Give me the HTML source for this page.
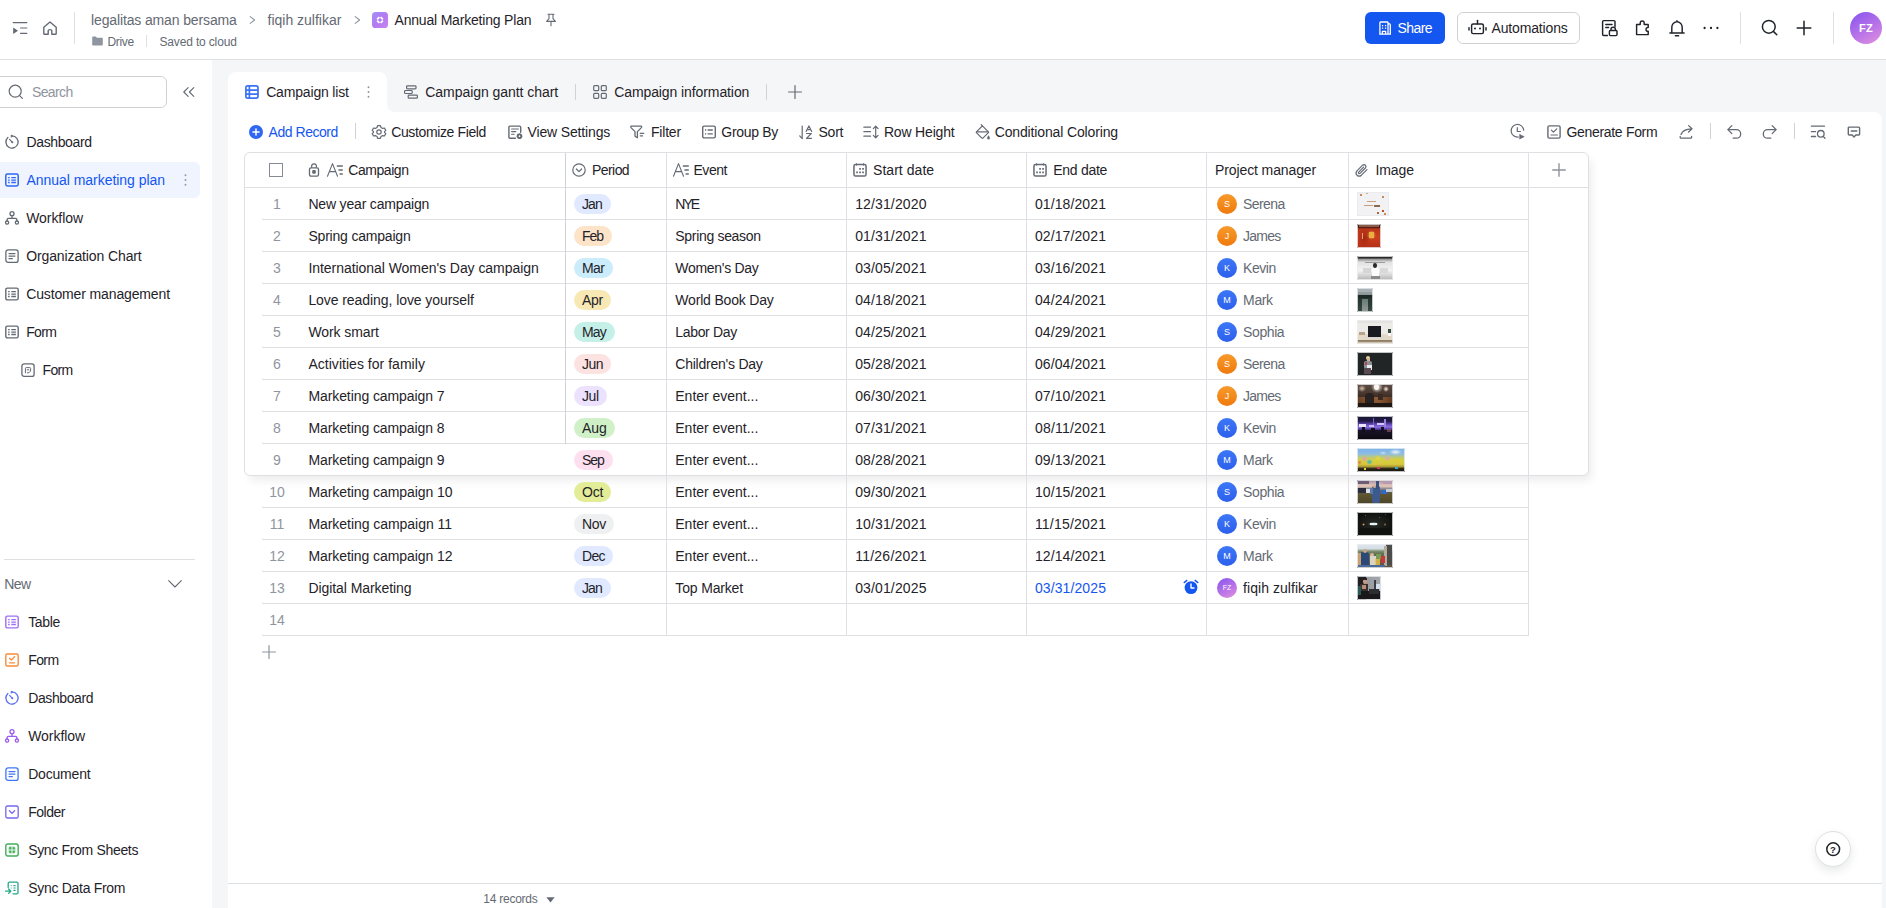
<!DOCTYPE html>
<html lang="en">
<head>
<meta charset="utf-8">
<title>Annual Marketing Plan</title>
<style>
*{box-sizing:border-box;margin:0;padding:0}
html,body{width:1886px;height:908px;overflow:hidden}
body{background:#f5f6f7;font-family:"Liberation Sans",sans-serif;font-size:14px;color:#1f2329;position:relative}
.abs{position:absolute}
svg{display:block;overflow:visible}
.t{position:absolute;white-space:nowrap;line-height:20px;height:20px}
.th{overflow:hidden;border-radius:1.5px}
.th b{position:absolute;left:0;top:0;right:0;bottom:0;box-shadow:inset 0 0 0 1px rgba(236,237,241,.8);border-radius:1.5px}
.th i{position:absolute;display:block;filter:blur(.5px)}
#hdr{position:absolute;left:0;top:0;width:1886px;height:60px;background:#fff;border-bottom:1px solid #dee0e3}
#side{position:absolute;left:0;top:60px;width:212px;height:848px;background:#fff;overflow:hidden}
#tabbar{position:absolute;left:228px;top:72px;width:1654px;height:40px}
#main{position:absolute;left:228px;top:112px;width:1654px;height:796px;background:#fff;border-radius:0 8px 0 0}
</style>
</head>
<body>
<div id="hdr">
<svg class="abs" style="left:12px;top:20px" width="16" height="16" viewBox="0 0 16 16" fill="none" stroke="#646a73" stroke-width="1.2" stroke-linecap="round" stroke-linejoin="round"><path d="M1.2 2.6H14.8M8.6 8H14.8M8.6 13.4H14.8"/><path d="M1.2 7.4L6 10.7L1.2 14Z" fill="#646a73" stroke="none"/></svg>
<svg class="abs" style="left:42px;top:20px" width="16" height="16" viewBox="0 0 16 16" fill="none" stroke="#646a73" stroke-width="1.4" stroke-linecap="round" stroke-linejoin="round"><path d="M1.8 7.2L8 2L14.2 7.2V13.4Q14.2 14.2 13.4 14.2H9.8V10.6Q9.8 9.6 8 9.6Q6.2 9.6 6.2 10.6V14.2H2.6Q1.8 14.2 1.8 13.4Z"/></svg>
<div class="abs" style="left:74px;top:12px;width:1px;height:32px;background:#dee0e3"></div>
<div class="t" style="left:91px;top:10px;color:#646a73;letter-spacing:-0.132px">legalitas aman bersama</div>
<svg class="abs" style="left:249px;top:16px" width="7" height="8" viewBox="0 0 7 8" fill="none" stroke="#8f959e" stroke-width="1.1" stroke-linecap="round" stroke-linejoin="round"><path d="M1.2 0.6L5.6 4L1.2 7.4"/></svg>
<div class="t" style="left:267.5px;top:10px;color:#646a73">fiqih zulfikar</div>
<svg class="abs" style="left:354px;top:16px" width="7" height="8" viewBox="0 0 7 8" fill="none" stroke="#8f959e" stroke-width="1.1" stroke-linecap="round" stroke-linejoin="round"><path d="M1.2 0.6L5.6 4L1.2 7.4"/></svg>
<svg class="abs" style="left:372px;top:12px" width="16" height="16" viewBox="0 0 16 16"><defs><linearGradient id="ga" x1="0" y1="0" x2="1" y2="1"><stop offset="0" stop-color="#9f90f7"/><stop offset="0.5" stop-color="#b47af2"/><stop offset="1" stop-color="#c985ee"/></linearGradient></defs><rect width="16" height="16" rx="3.6" fill="url(#ga)"/><path d="M5.1 7.4L7.4 5.1M8.6 5.1L10.9 7.4M10.9 8.6L8.6 10.9M7.4 10.9L5.1 8.6" stroke="#fff" stroke-width="1.8" fill="none"/></svg>
<div class="t" style="left:394.5px;top:10px;letter-spacing:-0.191px">Annual Marketing Plan</div>
<svg class="abs" style="left:545px;top:13px" width="12" height="14" viewBox="0 0 12 14" fill="none" stroke="#646a73" stroke-width="1.1" stroke-linecap="round" stroke-linejoin="round"><path d="M3 1.2H9M4 1.4V5.6L1.6 8.4H10.4L8 5.6V1.4M6 8.6V12.8"/></svg>
<svg class="abs" style="left:92px;top:36px" width="11" height="10" viewBox="0 0 11 10"><path d="M0.2 1.4Q0.2 0.6 1 0.6H3.8L4.9 1.8H10Q10.8 1.8 10.8 2.6V8.8Q10.8 9.6 10 9.6H1Q0.2 9.6 0.2 8.8Z" fill="#8f959e"/></svg>
<div class="t" style="left:107.5px;top:32px;color:#646a73;font-size:12px;letter-spacing:-0.329px">Drive</div>
<div class="abs" style="left:146px;top:35px;width:1px;height:12px;background:#dee0e3"></div>
<div class="t" style="left:159.5px;top:32px;color:#646a73;font-size:12px;letter-spacing:-0.158px">Saved to cloud</div>
<div class="abs" style="left:1365px;top:12px;width:80px;height:32px;border-radius:6px;background:#1456f0"></div>
<svg class="abs" style="left:1378px;top:20px" width="14" height="15" viewBox="0 0 14 15" fill="none" stroke="#fff" stroke-width="1.3" stroke-linejoin="round"><path d="M1.9 14.2V2.8Q1.9 2 2.7 2H9.2Q10 2 10 2.8V14.2M10 3.2L11.6 3.8Q12.3 4.1 12.3 4.9V14.2M1.2 14.2H13M4.4 14.2V11.4H7.6V14.2"/><path d="M3.9 4.9h1.3v1.3h-1.3zM6.9 4.9h1.3v1.3h-1.3zM3.9 7.5h1.3v1.3h-1.3zM6.9 7.5h1.3v1.3h-1.3z" fill="#fff" stroke="none"/></svg>
<div class="t" style="left:1397.5px;top:18px;color:#fff;letter-spacing:-0.586px">Share</div>
<div class="abs" style="left:1457px;top:12px;width:123px;height:32px;border-radius:6px;border:1px solid #d0d3d6;background:#fff"></div>
<svg class="abs" style="left:1468px;top:19px" width="19" height="16" viewBox="0 0 19 16" fill="none" stroke="#1f2329" stroke-width="1.45" stroke-linecap="round" stroke-linejoin="round"><rect x="3.6" y="5" width="11.8" height="9.6" rx="1.6"/><path d="M9.5 4.8V2.2M1 8.6V11M18 8.6V11"/><circle cx="9.5" cy="1.6" r="0.9" fill="#1f2329" stroke="none"/><circle cx="7" cy="9.6" r="1" fill="#1f2329" stroke="none"/><circle cx="12" cy="9.6" r="1" fill="#1f2329" stroke="none"/></svg>
<div class="t" style="left:1491.5px;top:18px;letter-spacing:-0.15px">Automations</div>
<svg class="abs" style="left:1601px;top:19px" width="17" height="18" viewBox="0 0 17 18" fill="none" stroke="#1f2329" stroke-width="1.45" stroke-linecap="round" stroke-linejoin="round"><path d="M6.4 16.4H2.6Q1.6 16.4 1.6 15.4V2.6Q1.6 1.6 2.6 1.6H13Q14 1.6 14 2.6V7.4"/><path d="M4.8 5.4H11M4.8 8.4H7.6"/><rect x="8.4" y="11.4" width="7.6" height="5.2" rx="1"/><path d="M10 11.2V10Q10 8.2 12.2 8.2Q14.4 8.2 14.4 10V11.2"/></svg>
<svg class="abs" style="left:1635px;top:20px" width="16" height="16" viewBox="0 0 16 16" fill="none" stroke="#1f2329" stroke-width="1.45" stroke-linecap="round" stroke-linejoin="round"><path d="M1.6 14.6V4.4H5.2V3.2Q5.2 1 7.2 1Q9.2 1 9.2 3.2V4.4H13.2V7.6Q11 7.4 11 9.4Q11 11.4 13.2 11.2V14.6Z"/></svg>
<svg class="abs" style="left:1669px;top:20px" width="16" height="17" viewBox="0 0 16 17" fill="none" stroke="#1f2329" stroke-width="1.45" stroke-linecap="round" stroke-linejoin="round"><path d="M2.8 12.8V7.6Q2.8 2.6 8 1.6Q13.2 2.6 13.2 7.6V12.8M0.9 13H15.1M6.4 15.7H9.6M8 0.7V1.6"/></svg>
<svg class="abs" style="left:1703px;top:26px" width="16" height="4" viewBox="0 0 16 4" fill="#1f2329"><circle cx="1.6" cy="2" r="1.15"/><circle cx="8" cy="2" r="1.15"/><circle cx="14.4" cy="2" r="1.15"/></svg>
<div class="abs" style="left:1740px;top:12px;width:1px;height:32px;background:#dee0e3"></div>
<svg class="abs" style="left:1761px;top:19px" width="17" height="17" viewBox="0 0 17 17" fill="none" stroke="#1f2329" stroke-width="1.5" stroke-linecap="round" stroke-linejoin="round"><circle cx="7.8" cy="7.8" r="6.4"/><path d="M12.6 12.6L15.8 15.8"/></svg>
<svg class="abs" style="left:1796px;top:20px" width="16" height="16" viewBox="0 0 16 16" fill="none" stroke="#1f2329" stroke-width="1.5" stroke-linecap="round" stroke-linejoin="round"><path d="M8 1.2V14.8M1.2 8H14.8"/></svg>
<div class="abs" style="left:1833px;top:12px;width:1px;height:32px;background:#dee0e3"></div>
<div class="abs" style="left:1850px;top:12px;width:32px;height:32px;border-radius:50%;background:linear-gradient(150deg,#8a56ee 5%,#b873e8 55%,#e293dd 100%);color:#fff;font-size:11px;font-weight:bold;text-align:center;line-height:32px;letter-spacing:0.3px">FZ</div>
</div>
<div id="side">
<div class="abs" style="left:-8px;top:16px;width:175px;height:32px;border:1px solid #d0d3d6;border-radius:6px"></div>
<svg class="abs" style="left:8px;top:24px" width="16" height="16" viewBox="0 0 16 16" fill="none" stroke="#646a73" stroke-width="1.2" stroke-linecap="round" stroke-linejoin="round"><circle cx="7.2" cy="7.2" r="6"/><path d="M11.6 11.6L14.4 14.4"/></svg>
<div class="t" style="left:32px;top:22px;color:#8f959e;letter-spacing:-0.629px">Search</div>
<svg class="abs" style="left:183px;top:27px" width="12" height="10" viewBox="0 0 12 10" fill="none" stroke="#646a73" stroke-width="1.1" stroke-linecap="round" stroke-linejoin="round"><path d="M5.2 0.6L0.8 5L5.2 9.4M10.8 0.6L6.4 5L10.8 9.4"/></svg>
<svg class="abs" style="left:5px;top:75px" width="14" height="14" viewBox="0 0 14 14" fill="none" stroke="#646a73" stroke-width="1.3" stroke-linecap="round" stroke-linejoin="round"><path d="M7 0.9A6.1 6.1 0 1 1 2.9 2.5"/><path d="M7.2 7.2L4.6 4.4" stroke-width="1.2"/><circle cx="7.3" cy="7.3" r="1" fill="#646a73" stroke="none"/><path d="M7.6 0.9L6.2 0.1V1.9Z" fill="#646a73" stroke-width="0.8"/></svg>
<div class="t" style="left:26.5px;top:72px;letter-spacing:-0.369px">Dashboard</div>
<div class="abs" style="left:-8px;top:102px;width:208px;height:36px;border-radius:6px;background:#eff4ff"></div>
<svg class="abs" style="left:184px;top:114px" width="3" height="12" viewBox="0 0 3 12" fill="#8f959e"><circle cx="1.5" cy="1.3" r="0.95"/><circle cx="1.5" cy="6" r="0.95"/><circle cx="1.5" cy="10.7" r="0.95"/></svg>
<svg class="abs" style="left:5px;top:113px" width="14" height="14" viewBox="0 0 14 14" fill="none" stroke="#2f66f4" stroke-width="1.5" stroke-linecap="round" stroke-linejoin="round"><rect x="0.8" y="1.1" width="12.4" height="11.8" rx="1.6"/><path d="M3.1 4.7H4.7M6.3 4.7H10.9M3.1 7.1H4.7M6.3 7.1H10.9M3.1 9.5H4.7M6.3 9.5H10.9" stroke-linecap="butt" stroke-width="1.3"/></svg>
<div class="t" style="left:26.5px;top:110px;color:#1456f0;letter-spacing:-0.037px">Annual marketing plan</div>
<svg class="abs" style="left:5px;top:151px" width="14" height="14" viewBox="0 0 14 14" fill="none" stroke="#646a73" stroke-width="1.3" stroke-linecap="round" stroke-linejoin="round"><circle cx="7" cy="2.7" r="2"/><circle cx="2.1" cy="11.6" r="1.6"/><circle cx="11.9" cy="11.6" r="1.6"/><path d="M7 4.8V7.4M2.1 9.9V8.8Q2.1 7.4 3.5 7.4H10.5Q11.9 7.4 11.9 8.8V9.9"/></svg>
<div class="t" style="left:26.2px;top:148px;letter-spacing:-0.057px">Workflow</div>
<svg class="abs" style="left:5px;top:189px" width="14" height="14" viewBox="0 0 14 14" fill="none" stroke="#646a73" stroke-width="1.3" stroke-linecap="round" stroke-linejoin="round"><rect x="0.9" y="0.8" width="12.2" height="12.6" rx="2.2"/><path d="M4 4.6H10M4 7.1H10M4 9.6H7.4" stroke-width="1.2"/></svg>
<div class="t" style="left:26.2px;top:186px;letter-spacing:-0.115px">Organization Chart</div>
<svg class="abs" style="left:5px;top:227px" width="14" height="14" viewBox="0 0 14 14" fill="none" stroke="#646a73" stroke-width="1.4" stroke-linecap="round" stroke-linejoin="round"><rect x="0.8" y="1.1" width="12.4" height="11.8" rx="1.6"/><path d="M3.1 4.7H4.7M6.3 4.7H10.9M3.1 7.1H4.7M6.3 7.1H10.9M3.1 9.5H4.7M6.3 9.5H10.9" stroke-linecap="butt" stroke-width="1.3"/></svg>
<div class="t" style="left:26.2px;top:224px;letter-spacing:-0.134px">Customer management</div>
<svg class="abs" style="left:5px;top:265px" width="14" height="14" viewBox="0 0 14 14" fill="none" stroke="#646a73" stroke-width="1.4" stroke-linecap="round" stroke-linejoin="round"><rect x="0.8" y="1.1" width="12.4" height="11.8" rx="1.6"/><path d="M3.1 4.7H4.7M6.3 4.7H10.9M3.1 7.1H4.7M6.3 7.1H10.9M3.1 9.5H4.7M6.3 9.5H10.9" stroke-linecap="butt" stroke-width="1.3"/></svg>
<div class="t" style="left:26.2px;top:262px;letter-spacing:-0.647px">Form</div>
<svg class="abs" style="left:21px;top:303px" width="14" height="14" viewBox="0 0 14 14" fill="none" stroke="#646a73" stroke-width="1.3" stroke-linecap="round" stroke-linejoin="round"><rect x="0.9" y="0.8" width="12.2" height="12.6" rx="2.2"/><path d="M4.4 9.8V5.4Q4.4 4.6 5.2 4.6H8.8Q9.6 4.6 9.6 5.4V8L7.8 9.8H6.4M6.2 6.8H7.8" stroke-width="1"/></svg>
<div class="t" style="left:42.5px;top:300px;letter-spacing:-0.647px">Form</div>
<div class="abs" style="left:4px;top:499px;width:191px;height:1px;background:#dee0e3"></div>
<div class="t" style="left:4.2px;top:514px;color:#646a73;letter-spacing:-0.6px">New</div>
<svg class="abs" style="left:168px;top:520px" width="14" height="8" viewBox="0 0 14 8" fill="none" stroke="#646a73" stroke-width="1.1" stroke-linecap="round" stroke-linejoin="round"><path d="M0.7 0.7L7 7L13.3 0.7"/></svg>
<svg class="abs" style="left:5px;top:555px" width="14" height="14" viewBox="0 0 14 14" fill="none" stroke="#9f6ff1" stroke-width="1.4" stroke-linecap="round" stroke-linejoin="round"><rect x="0.8" y="1.1" width="12.4" height="11.8" rx="1.6"/><path d="M3.1 4.7H4.7M6.3 4.7H10.9M3.1 7.1H4.7M6.3 7.1H10.9M3.1 9.5H4.7M6.3 9.5H10.9" stroke-linecap="butt" stroke-width="1.3"/></svg>
<div class="t" style="left:28.2px;top:552px;letter-spacing:-0.363px">Table</div>
<svg class="abs" style="left:5px;top:593px" width="14" height="14" viewBox="0 0 14 14" fill="none" stroke="#f88c3a" stroke-width="1.4" stroke-linecap="round" stroke-linejoin="round"><rect x="0.8" y="1" width="12.4" height="12" rx="1.4"/><path d="M4.6 5.2L6.4 7L9.6 3.8M4.4 9.8H9.6" stroke-width="1.3"/></svg>
<div class="t" style="left:28.2px;top:590px;letter-spacing:-0.58px">Form</div>
<svg class="abs" style="left:5px;top:631px" width="14" height="14" viewBox="0 0 14 14" fill="none" stroke="#5b6cf5" stroke-width="1.3" stroke-linecap="round" stroke-linejoin="round"><path d="M7 0.9A6.1 6.1 0 1 1 2.9 2.5"/><path d="M7.2 7.2L4.6 4.4" stroke-width="1.2"/><circle cx="7.3" cy="7.3" r="1" fill="#5b6cf5" stroke="none"/><path d="M7.6 0.9L6.2 0.1V1.9Z" fill="#5b6cf5" stroke-width="0.8"/></svg>
<div class="t" style="left:28.2px;top:628px;letter-spacing:-0.394px">Dashboard</div>
<svg class="abs" style="left:5px;top:669px" width="14" height="14" viewBox="0 0 14 14" fill="none" stroke="#9b5cf0" stroke-width="1.3" stroke-linecap="round" stroke-linejoin="round"><circle cx="7" cy="2.7" r="2"/><circle cx="2.1" cy="11.6" r="1.6"/><circle cx="11.9" cy="11.6" r="1.6"/><path d="M7 4.8V7.4M2.1 9.9V8.8Q2.1 7.4 3.5 7.4H10.5Q11.9 7.4 11.9 8.8V9.9"/></svg>
<div class="t" style="left:28.2px;top:666px;letter-spacing:-0.042px">Workflow</div>
<svg class="abs" style="left:5px;top:707px" width="14" height="14" viewBox="0 0 14 14" fill="none" stroke="#3f77f6" stroke-width="1.3" stroke-linecap="round" stroke-linejoin="round"><rect x="0.9" y="0.8" width="12.2" height="12.6" rx="2.2"/><path d="M4 4.6H10M4 7.1H10M4 9.6H7.4" stroke-width="1.2"/></svg>
<div class="t" style="left:28.2px;top:704px;letter-spacing:-0.197px">Document</div>
<svg class="abs" style="left:5px;top:745px" width="14" height="14" viewBox="0 0 14 14" fill="none" stroke="#7468f2" stroke-width="1.3" stroke-linecap="round" stroke-linejoin="round"><rect x="0.8" y="1" width="12.4" height="12" rx="1.6"/><path d="M4.4 5.8L7 8.4L9.6 5.8"/></svg>
<div class="t" style="left:28.2px;top:742px;letter-spacing:-0.471px">Folder</div>
<svg class="abs" style="left:5px;top:783px" width="14" height="14" viewBox="0 0 14 14" fill="none" stroke="#44ad5c" stroke-width="1.4" stroke-linecap="round" stroke-linejoin="round"><rect x="0.8" y="1" width="12.4" height="12" rx="2"/><rect x="4.2" y="4.2" width="5.6" height="5.6" rx="0.6" fill="#44ad5c" stroke-width="0.8"/><path d="M7 4V10M4 7H10" stroke="#fff" stroke-width="0.9" stroke-linecap="butt"/></svg>
<div class="t" style="left:28.2px;top:780px;letter-spacing:-0.328px">Sync From Sheets</div>
<svg class="abs" style="left:5px;top:821px" width="14" height="14" viewBox="0 0 14 14" fill="none" stroke="#25a887" stroke-width="1.3" stroke-linecap="round" stroke-linejoin="round"><path d="M3.2 6.6V2.4Q3.2 1.2 4.4 1.2H11.8Q13 1.2 13 2.4V11.6Q13 12.8 11.8 12.8H8"/><path d="M5.8 4.6H6.6M8.4 4.6H10.6M5.8 7H6.6M8.4 7H10.6M8.4 9.4H10.6" stroke-linecap="butt" stroke-width="1.2"/><path d="M0.6 10.2H5.4M3.6 8L5.8 10.2L3.6 12.4"/></svg>
<div class="t" style="left:28.2px;top:818px;letter-spacing:-0.293px">Sync Data From</div>
</div>
<div id="tabbar">
<div class="abs" style="left:0px;top:0px;width:159px;height:40px;background:#fff;border-radius:8px 8px 0 0"></div>
<div class="abs" style="left:159px;top:32px;width:8px;height:8px;background:radial-gradient(circle at 100% 0,rgba(255,255,255,0) 7.5px,#fff 8.5px)"></div>
<svg class="abs" style="left:17px;top:13px" width="14" height="14" viewBox="0 0 14 14" fill="none" stroke="#3b73f6" stroke-width="1.7"><rect x="0.9" y="0.9" width="12.1" height="12.2" rx="1.8"/><path d="M0.9 5.1H13M0.9 9.1H13M4.4 0.9V13.1"/></svg>
<div class="t" style="left:38.2px;top:10px;letter-spacing:-0.173px">Campaign list</div>
<svg class="abs" style="left:139px;top:14px" width="3" height="12" viewBox="0 0 3 12" fill="#8f959e"><circle cx="1.5" cy="1.3" r="0.95"/><circle cx="1.5" cy="6" r="0.95"/><circle cx="1.5" cy="10.7" r="0.95"/></svg>
<svg class="abs" style="left:176px;top:13px" width="14" height="14" viewBox="0 0 14 14" fill="none" stroke="#646a73" stroke-width="1.2" stroke-linecap="round" stroke-linejoin="round"><rect x="2.6" y="0.8" width="9.4" height="3" rx="0.8"/><rect x="0.6" y="5.5" width="7.6" height="3" rx="0.8"/><rect x="4.2" y="10.2" width="9.2" height="3" rx="0.8"/></svg>
<div class="t" style="left:197.3px;top:10px;letter-spacing:-0.052px">Campaign gantt chart</div>
<div class="abs" style="left:347px;top:12px;width:1px;height:16px;background:#d0d3d6"></div>
<svg class="abs" style="left:365px;top:13px" width="14" height="14" viewBox="0 0 14 14" fill="none" stroke="#646a73" stroke-width="1.2" stroke-linecap="round" stroke-linejoin="round"><rect x="0.7" y="0.7" width="5" height="5" rx="1"/><rect x="8.3" y="0.7" width="5" height="5" rx="1"/><rect x="0.7" y="8.3" width="5" height="5" rx="1"/><rect x="8.3" y="8.3" width="5" height="5" rx="1"/></svg>
<div class="t" style="left:386.2px;top:10px;letter-spacing:-0.094px">Campaign information</div>
<div class="abs" style="left:538px;top:12px;width:1px;height:16px;background:#d0d3d6"></div>
<svg class="abs" style="left:560px;top:13px" width="14" height="14" viewBox="0 0 14 14" fill="none" stroke="#646a73" stroke-width="1.2" stroke-linecap="round" stroke-linejoin="round"><path d="M7 0.6V13.4M0.6 7H13.4"/></svg>
</div>
<div id="main">
<svg class="abs" style="left:21px;top:13px" width="14" height="14" viewBox="0 0 14 14"><circle cx="7" cy="7" r="7" fill="#2f66f4"/><path d="M7 4V10M4 7H10" stroke="#fff" stroke-width="1.5" stroke-linecap="round"/></svg>
<div class="t" style="left:40.5px;top:10px;color:#1456f0;letter-spacing:-0.456px">Add Record</div>
<div class="abs" style="left:127px;top:11px;width:1px;height:16px;background:#d0d3d6"></div>
<svg class="abs" style="left:144px;top:13px" width="14" height="14" viewBox="0 0 14 14" fill="none" stroke="#646a73" stroke-width="1.2" stroke-linecap="round" stroke-linejoin="round"><path d="M5.6 0.7H8.4L9 2.5L10.6 3.4L12.4 3L13.8 5.4L12.5 6.7V7.3L13.8 8.6L12.4 11L10.6 10.6L9 11.5L8.4 13.3H5.6L5 11.5L3.4 10.6L1.6 11L0.2 8.6L1.5 7.3V6.7L0.2 5.4L1.6 3L3.4 3.4L5 2.5Z"/><circle cx="7" cy="7" r="2.2"/></svg>
<div class="t" style="left:163.2px;top:10px;letter-spacing:-0.373px">Customize Field</div>
<svg class="abs" style="left:280px;top:13px" width="15" height="14" viewBox="0 0 15 14" fill="none" stroke="#646a73" stroke-width="1.2" stroke-linecap="round" stroke-linejoin="round"><path d="M7.4 13.2H2Q0.9 13.2 0.9 12.1V2.2Q0.9 1.1 2 1.1H11.6Q12.7 1.1 12.7 2.2V7.2" stroke-width="1.4"/><path d="M3.6 4H10.4M3.6 6.6H7.8M3.6 9.2H6.2" stroke-width="1.1"/><circle cx="11.5" cy="11.2" r="2.1" stroke-width="1.6" stroke-dasharray="1.1 0.55"/><circle cx="11.5" cy="11.2" r="1.5" stroke-width="1.2"/></svg>
<div class="t" style="left:299.6px;top:10px;letter-spacing:-0.155px">View Settings</div>
<svg class="abs" style="left:402px;top:13px" width="15" height="14" viewBox="0 0 15 14" fill="none" stroke="#646a73" stroke-width="1.2" stroke-linecap="round" stroke-linejoin="round"><path d="M1 1.2H11.4Q11.9 1.9 11.4 2.6L7.4 6.6V12.8L5 11.2V6.6L1 2.6Q0.5 1.9 1 1.2Z" stroke-width="1.3"/><path d="M9.8 8.3H14.2M9.8 10.9H13" stroke-width="1.2" stroke-linecap="butt"/></svg>
<div class="t" style="left:423px;top:10px;letter-spacing:-0.199px">Filter</div>
<svg class="abs" style="left:474px;top:13px" width="14" height="14" viewBox="0 0 14 14" fill="none" stroke="#646a73" stroke-width="1.2" stroke-linecap="round" stroke-linejoin="round"><rect x="0.7" y="1.1" width="12.6" height="11.8" rx="1.4" stroke-width="1.4"/><path d="M3 5H4.2M5.6 5H10.8M3 8.9H4.2M5.6 8.9H10.8" stroke-linecap="butt" stroke-width="1.3"/></svg>
<div class="t" style="left:493.3px;top:10px;letter-spacing:-0.304px">Group By</div>
<svg class="abs" style="left:571px;top:13px" width="15" height="14" viewBox="0 0 15 14" fill="none" stroke="#646a73" stroke-width="1.2" stroke-linecap="round" stroke-linejoin="round"><path d="M3.2 1V13.4M0.7 10.9L3.2 13.6"/><path d="M7.1 6.4L9.9 0.9L12.7 6.4M8.1 4.6H11.7M7.5 8.5H12.3L7.5 13.3H12.5" stroke-width="1.2"/></svg>
<div class="t" style="left:590.5px;top:10px;letter-spacing:-0.224px">Sort</div>
<svg class="abs" style="left:635px;top:13px" width="16" height="14" viewBox="0 0 16 14" fill="none" stroke="#646a73" stroke-width="1.2" stroke-linecap="round" stroke-linejoin="round"><path d="M0.9 2.2H7.5M0.9 6.7H7.5M0.9 11.2H7.5" stroke-width="1.3"/><path d="M12.7 1.2V12.8M10.3 3.6L12.7 1.1L15.1 3.6M10.3 10.4L12.7 12.9L15.1 10.4"/></svg>
<div class="t" style="left:655.9px;top:10px;letter-spacing:-0.172px">Row Height</div>
<svg class="abs" style="left:747px;top:13px" width="16" height="15" viewBox="0 0 16 15" fill="none" stroke="#646a73" stroke-width="1.2" stroke-linecap="round" stroke-linejoin="round"><path d="M7.4 0.8L13.4 6.8Q13.8 7.2 13.4 7.6L7.9 13.1Q7.4 13.5 6.9 13.1L1.4 7.6Q1 7.2 1.4 6.8Z"/><path d="M6.2 -0.4L7.4 0.8" /><path d="M1.6 6.8H13"/><path d="M13.5 10.2Q15.4 12.6 14.9 13.6Q14.4 14.5 13.5 14.5Q12.6 14.5 12.1 13.6Q11.6 12.6 13.5 10.2Z" fill="#646a73" stroke="none"/></svg>
<div class="t" style="left:766.7px;top:10px;letter-spacing:-0.138px">Conditional Coloring</div>
<svg class="abs" style="left:1282px;top:12px" width="16" height="16" viewBox="0 0 16 16" fill="none" stroke="#646a73" stroke-width="1.2" stroke-linecap="round" stroke-linejoin="round"><path d="M13.7 6.2A6.3 6.3 0 1 0 8.4 13"/><path d="M7.3 3.6V7.5H10.4"/><path d="M9.8 10.5L14.2 12.7L9.8 14.9Z" fill="#646a73" stroke-width="0.6"/></svg>
<svg class="abs" style="left:1319px;top:13px" width="14" height="14" viewBox="0 0 14 14" fill="none" stroke="#646a73" stroke-width="1.2" stroke-linecap="round" stroke-linejoin="round"><rect x="0.9" y="0.9" width="12.2" height="12.2" rx="1.4" stroke-width="1.4"/><path d="M4.4 5.2L6.4 7.2L9.8 3.8M4 10H10.4"/></svg>
<div class="t" style="left:1338.4px;top:10px;letter-spacing:-0.306px">Generate Form</div>
<svg class="abs" style="left:1451px;top:12px" width="15" height="16" viewBox="0 0 15 16" fill="none" stroke="#646a73" stroke-width="1.3" stroke-linecap="round" stroke-linejoin="round"><path d="M2 10.4Q4 5 12.6 4.8M9.6 1.6L13 4.8L9.6 8"/><path d="M1.2 12.4V13.4Q1.2 14.2 2 14.2H11.8Q12.6 14.2 12.6 13.4V12.4"/></svg>
<div class="abs" style="left:1482px;top:11px;width:1px;height:16px;background:#d0d3d6"></div>
<svg class="abs" style="left:1499px;top:12px" width="15" height="16" viewBox="0 0 15 16" fill="none" stroke="#646a73" stroke-width="1.3" stroke-linecap="round" stroke-linejoin="round"><path d="M4.8 1.6L0.9 5.6L4.8 9.6"/><path d="M1.2 5.6H9.4A4.3 4.3 0 0 1 9.4 14.2H6.2"/></svg>
<svg class="abs" style="left:1534px;top:12px" width="15" height="16" viewBox="0 0 15 16" fill="none" stroke="#646a73" stroke-width="1.3" stroke-linecap="round" stroke-linejoin="round"><path d="M10.2 1.6L14.1 5.6L10.2 9.6"/><path d="M13.8 5.6H5.6A4.3 4.3 0 0 0 5.6 14.2H8.8"/></svg>
<div class="abs" style="left:1566px;top:11px;width:1px;height:16px;background:#d0d3d6"></div>
<svg class="abs" style="left:1582px;top:12px" width="16" height="16" viewBox="0 0 16 16" fill="none" stroke="#646a73" stroke-width="1.3" stroke-linecap="round" stroke-linejoin="round"><path d="M1.4 2.2H14.5M1.4 7.6H5.6M1.4 12.5H5.6"/><circle cx="10.8" cy="9.8" r="3.3"/><path d="M13.2 12.4L15 14.3"/></svg>
<svg class="abs" style="left:1618px;top:12px" width="16" height="16" viewBox="0 0 16 16" fill="none" stroke="#646a73" stroke-width="1.4" stroke-linecap="round" stroke-linejoin="round"><path d="M3.3 3.1H12.6Q13.6 3.1 13.6 4.1V10Q13.6 11 12.6 11H9.8L8 12.9L6.2 11H3.3Q2.3 11 2.3 10V4.1Q2.3 3.1 3.3 3.1Z"/><path d="M5.2 7H10.8"/></svg>
<div class="abs" style="left:16px;top:40px;width:1345px;height:324px;border:1px solid #dee0e3;border-radius:6px;background:#fff;box-shadow:4px 6px 10px -2px rgba(31,35,41,0.09)"></div>
<div class="abs" style="left:17px;top:75px;width:1343px;height:1px;background:#dee0e3"></div>
<div class="abs" style="left:34px;top:107px;width:1267px;height:1px;background:#dee0e3"></div>
<div class="abs" style="left:34px;top:139px;width:1267px;height:1px;background:#dee0e3"></div>
<div class="abs" style="left:34px;top:171px;width:1267px;height:1px;background:#dee0e3"></div>
<div class="abs" style="left:34px;top:203px;width:1267px;height:1px;background:#dee0e3"></div>
<div class="abs" style="left:34px;top:235px;width:1267px;height:1px;background:#dee0e3"></div>
<div class="abs" style="left:34px;top:267px;width:1267px;height:1px;background:#dee0e3"></div>
<div class="abs" style="left:34px;top:299px;width:1267px;height:1px;background:#dee0e3"></div>
<div class="abs" style="left:34px;top:331px;width:1267px;height:1px;background:#dee0e3"></div>
<div class="abs" style="left:34px;top:395px;width:1267px;height:1px;background:#dee0e3"></div>
<div class="abs" style="left:34px;top:427px;width:1267px;height:1px;background:#dee0e3"></div>
<div class="abs" style="left:34px;top:459px;width:1267px;height:1px;background:#dee0e3"></div>
<div class="abs" style="left:34px;top:491px;width:1267px;height:1px;background:#dee0e3"></div>
<div class="abs" style="left:34px;top:523px;width:1267px;height:1px;background:#dee0e3"></div>
<div class="abs" style="left:337px;top:41px;width:1px;height:291px;background:#d0d3d6"></div>
<div class="abs" style="left:438px;top:41px;width:1px;height:483px;background:#dee0e3"></div>
<div class="abs" style="left:618px;top:41px;width:1px;height:483px;background:#dee0e3"></div>
<div class="abs" style="left:798px;top:41px;width:1px;height:483px;background:#dee0e3"></div>
<div class="abs" style="left:978px;top:41px;width:1px;height:483px;background:#dee0e3"></div>
<div class="abs" style="left:1120px;top:41px;width:1px;height:483px;background:#dee0e3"></div>
<div class="abs" style="left:1300px;top:41px;width:1px;height:483px;background:#dee0e3"></div>
<div class="abs" style="left:41px;top:51px;width:14px;height:14px;border:1.5px solid #858b94"></div>
<svg class="abs" style="left:80px;top:51px" width="12" height="14" viewBox="0 0 12 14" fill="none" stroke="#646a73" stroke-width="1.2" stroke-linejoin="round"><rect x="1.5" y="4.8" width="9" height="8.4" rx="1.4" stroke-width="1.3"/><path d="M3.6 4.6V3.4Q3.6 0.9 6 0.9Q8.4 0.9 8.4 3.4V4.6"/><rect x="4.2" y="7.1" width="3.6" height="3.6" rx="1" fill="#646a73" stroke="none"/></svg>
<svg class="abs" style="left:99px;top:51px" width="16" height="14" viewBox="0 0 16 14" fill="none" stroke="#646a73" stroke-width="1.2" stroke-linecap="round" stroke-linejoin="round"><path d="M0.5 13.2L5.5 0.6L10.5 13.2M2.4 8.6H8.6" stroke-width="1.1"/><path d="M9.8 2.9H15.8M11.4 7H15.8M12.6 11H15.8" stroke-linecap="butt" stroke-width="1.5"/></svg>
<div class="t" style="left:120.3px;top:48px;letter-spacing:-0.454px">Campaign</div>
<svg class="abs" style="left:344px;top:51px" width="14" height="14" viewBox="0 0 14 14" fill="none" stroke="#646a73" stroke-width="1.2" stroke-linecap="round" stroke-linejoin="round"><circle cx="7" cy="7" r="6.2"/><path d="M4.4 6L7 8.6L9.6 6"/></svg>
<div class="t" style="left:364.1px;top:48px;letter-spacing:-0.591px">Period</div>
<svg class="abs" style="left:445px;top:51px" width="16" height="14" viewBox="0 0 16 14" fill="none" stroke="#646a73" stroke-width="1.2" stroke-linecap="round" stroke-linejoin="round"><path d="M0.5 13.2L5.5 0.6L10.5 13.2M2.4 8.6H8.6" stroke-width="1.1"/><path d="M9.8 2.9H15.8M11.4 7H15.8M12.6 11H15.8" stroke-linecap="butt" stroke-width="1.5"/></svg>
<div class="t" style="left:465.4px;top:48px;letter-spacing:-0.424px">Event</div>
<svg class="abs" style="left:625px;top:51px" width="14" height="14" viewBox="0 0 14 14" fill="none" stroke="#646a73" stroke-width="1.2" stroke-linecap="round" stroke-linejoin="round"><rect x="0.95" y="1.55" width="12.1" height="11.5" rx="1.6" stroke-width="1.5"/><path d="M3.5 0.3V2.6M10.5 0.3V2.6" stroke-width="1" stroke-linecap="butt"/><path d="M6.2 5.1h1.7v1.7h-1.7zM9.2 5.1h1.7v1.7h-1.7zM3.2 8.6h1.7v1.7h-1.7zM6.2 8.6h1.7v1.7h-1.7zM9.2 8.6h1.7v1.7h-1.7z" fill="#646a73" stroke="none"/></svg>
<div class="t" style="left:645px;top:48px;letter-spacing:0.046px">Start date</div>
<svg class="abs" style="left:805px;top:51px" width="14" height="14" viewBox="0 0 14 14" fill="none" stroke="#646a73" stroke-width="1.2" stroke-linecap="round" stroke-linejoin="round"><rect x="0.95" y="1.55" width="12.1" height="11.5" rx="1.6" stroke-width="1.5"/><path d="M3.5 0.3V2.6M10.5 0.3V2.6" stroke-width="1" stroke-linecap="butt"/><path d="M6.2 5.1h1.7v1.7h-1.7zM9.2 5.1h1.7v1.7h-1.7zM3.2 8.6h1.7v1.7h-1.7zM6.2 8.6h1.7v1.7h-1.7zM9.2 8.6h1.7v1.7h-1.7z" fill="#646a73" stroke="none"/></svg>
<div class="t" style="left:825.2px;top:48px;letter-spacing:-0.262px">End date</div>
<div class="t" style="left:987.1px;top:48px;letter-spacing:-0.119px">Project manager</div>
<svg class="abs" style="left:1126px;top:51px" width="15" height="15" viewBox="0 0 15 15" fill="none" stroke="#646a73" stroke-width="1.2" stroke-linecap="round" stroke-linejoin="round"><path d="M13 6.6L7.4 12.2Q5.2 14.2 3 12.2Q1 10 3 7.8L8.6 2.2Q10 0.9 11.4 2.2Q12.7 3.6 11.4 5L6 10.4Q5.3 11 4.7 10.4Q4.1 9.7 4.7 9.1L9.6 4.2"/></svg>
<div class="t" style="left:1147.4px;top:48px;letter-spacing:-0.048px">Image</div>
<svg class="abs" style="left:1324px;top:51px" width="14" height="14" viewBox="0 0 14 14" fill="none" stroke="#8f959e" stroke-width="1.4" stroke-linecap="round" stroke-linejoin="round"><path d="M7 0.7V13.3M0.7 7H13.3"/></svg>
<div class="t" style="left:34px;top:82px;color:#8f959e;width:30px;text-align:center">1</div>
<div class="t" style="left:80.4px;top:82px;letter-spacing:-0.173px">New year campaign</div>
<div class="abs" style="left:346.3px;top:82px;width:36.4px;height:20px;border-radius:10px;background:#e0e9ff"></div>
<div class="t" style="left:354px;top:82px;letter-spacing:-0.881px">Jan</div>
<div class="t" style="left:447.3px;top:82px;letter-spacing:-1.948px">NYE</div>
<div class="t" style="left:627.2px;top:82px;letter-spacing:0.13px">12/31/2020</div>
<div class="t" style="left:806.9px;top:82px;letter-spacing:0.108px">01/18/2021</div>
<div class="abs" style="left:989px;top:82px;width:20px;height:20px;border-radius:50%;background:linear-gradient(#f89a2c,#ef7a0c);color:#fff;font-size:9px;text-align:center;line-height:20px">S</div>
<div class="t" style="left:1015.1px;top:82px;color:#646a73;letter-spacing:-0.585px">Serena</div>
<div class="abs th" style="left:1129px;top:80px;width:32px;height:24px;background:#f2f1f4;box-shadow:inset 0 0 0 1px #e2e2e6"><i style="left:10px;top:9px;width:9px;height:1.4px;background:#c9a27a"></i><i style="left:7px;top:13px;width:9px;height:1.4px;background:#c4a07c"></i><i style="left:17px;top:13px;width:6px;height:1.6px;background:#8a6a4a"></i><i style="left:25px;top:18px;width:2px;height:2px;background:#b5542a"></i><i style="left:27px;top:21px;width:2px;height:1.5px;background:#c98a5a"></i><i style="left:3px;top:2px;width:2px;height:1.5px;background:#c98a5a"></i><i style="left:9px;top:1px;width:2px;height:1px;background:#d8a878"></i><i style="left:25px;top:4px;width:1.5px;height:2px;background:#c98a5a"></i><i style="left:20px;top:20px;width:2px;height:1.5px;background:#a86a3a"></i><b></b></div>
<div class="t" style="left:34px;top:114px;color:#8f959e;width:30px;text-align:center">2</div>
<div class="t" style="left:80.4px;top:114px;letter-spacing:-0.194px">Spring campaign</div>
<div class="abs" style="left:346.3px;top:114px;width:37.7px;height:20px;border-radius:10px;background:#fde3c8"></div>
<div class="t" style="left:354px;top:114px;letter-spacing:-1.005px">Feb</div>
<div class="t" style="left:447.3px;top:114px;letter-spacing:-0.314px">Spring season</div>
<div class="t" style="left:627.2px;top:114px;letter-spacing:0.13px">01/31/2021</div>
<div class="t" style="left:806.9px;top:114px;letter-spacing:0.108px">02/17/2021</div>
<div class="abs" style="left:989px;top:114px;width:20px;height:20px;border-radius:50%;background:linear-gradient(#f89a2c,#ef7a0c);color:#fff;font-size:9px;text-align:center;line-height:20px">J</div>
<div class="t" style="left:1015.1px;top:114px;color:#646a73;letter-spacing:-0.755px">James</div>
<div class="abs th" style="left:1129px;top:112px;width:24px;height:24px;background:linear-gradient(#3a1712 0 13%,#b8341a 20%,#cc3e1e 55%,#b42e16 100%)"><i style="left:0px;top:5px;width:14px;height:18px;background:radial-gradient(closest-side,#a02810,transparent)"></i><i style="left:10px;top:6px;width:9px;height:10px;background:radial-gradient(closest-side,#f2c24a,rgba(220,120,40,0))"></i><i style="left:12px;top:8px;width:5px;height:6px;background:#e8b040"></i><i style="left:5px;top:9px;width:1.4px;height:6px;background:#e8a088"></i><i style="left:2px;top:1px;width:20px;height:1.5px;background:#8a5a4a"></i><b></b></div>
<div class="t" style="left:34px;top:146px;color:#8f959e;width:30px;text-align:center">3</div>
<div class="t" style="left:80.4px;top:146px;letter-spacing:-0.048px">International Women&#39;s Day campaign</div>
<div class="abs" style="left:346.3px;top:146px;width:38.5px;height:20px;border-radius:10px;background:#cbecfb"></div>
<div class="t" style="left:354px;top:146px;letter-spacing:-0.597px">Mar</div>
<div class="t" style="left:447.3px;top:146px;letter-spacing:-0.292px">Women&#39;s Day</div>
<div class="t" style="left:627.2px;top:146px;letter-spacing:0.13px">03/05/2021</div>
<div class="t" style="left:806.9px;top:146px;letter-spacing:0.108px">03/16/2021</div>
<div class="abs" style="left:989px;top:146px;width:20px;height:20px;border-radius:50%;background:linear-gradient(#3d76f6,#2c60ec);color:#fff;font-size:9px;text-align:center;line-height:20px">K</div>
<div class="t" style="left:1015.1px;top:146px;color:#646a73;letter-spacing:-0.479px">Kevin</div>
<div class="abs th" style="left:1129px;top:144px;width:36px;height:24px;background:linear-gradient(#2a2a2a 0 8%,#9a9a9a 14%,#e2e2e2 26%,#f3f3f3 60%,#d2d2d2 82%,#b4b4b4 100%)"><i style="left:8px;top:6px;width:20px;height:1.4px;background:#9c9c9c"></i><i style="left:6px;top:12px;width:8px;height:5px;background:#d6d6d6"></i><i style="left:23px;top:12px;width:8px;height:5px;background:#d9d9d9"></i><i style="left:15px;top:10.5px;width:6.5px;height:12.5px;background:#fbfbfb;border-radius:3px 3px 0 0"></i><i style="left:15.5px;top:6.5px;width:4.5px;height:5px;background:#2a2a2a;border-radius:50%"></i><i style="left:14px;top:20px;width:9px;height:3px;background:#8a8a8a"></i><b></b></div>
<div class="t" style="left:34px;top:178px;color:#8f959e;width:30px;text-align:center">4</div>
<div class="t" style="left:80.4px;top:178px;letter-spacing:-0.071px">Love reading, love yourself</div>
<div class="abs" style="left:346.3px;top:178px;width:36.7px;height:20px;border-radius:10px;background:#f8e9b4"></div>
<div class="t" style="left:354px;top:178px;letter-spacing:-0.341px">Apr</div>
<div class="t" style="left:447.3px;top:178px;letter-spacing:-0.183px">World Book Day</div>
<div class="t" style="left:627.2px;top:178px;letter-spacing:0.13px">04/18/2021</div>
<div class="t" style="left:806.9px;top:178px;letter-spacing:0.108px">04/24/2021</div>
<div class="abs" style="left:989px;top:178px;width:20px;height:20px;border-radius:50%;background:linear-gradient(#3d76f6,#2c60ec);color:#fff;font-size:9px;text-align:center;line-height:20px">M</div>
<div class="t" style="left:1015.1px;top:178px;color:#646a73;letter-spacing:-0.365px">Mark</div>
<div class="abs th" style="left:1129px;top:176px;width:16px;height:24px;background:linear-gradient(#909c9e 0 26%,#5a6866 32%,#25342f 42%,#2c3c36 70%,#3c4a45 100%)"><i style="left:4.5px;top:11px;width:6px;height:12px;background:linear-gradient(#7c8c88,#a4b0ac);opacity:.8"></i><i style="left:0px;top:7px;width:16px;height:3px;background:#1e2a26"></i><i style="left:1px;top:1px;width:14px;height:3px;background:#a8b2b4"></i><b></b></div>
<div class="t" style="left:34px;top:210px;color:#8f959e;width:30px;text-align:center">5</div>
<div class="t" style="left:80.4px;top:210px;letter-spacing:-0.087px">Work smart</div>
<div class="abs" style="left:346.3px;top:210px;width:40.3px;height:20px;border-radius:10px;background:#c4f0e7"></div>
<div class="t" style="left:354px;top:210px;letter-spacing:-0.869px">May</div>
<div class="t" style="left:447.3px;top:210px;letter-spacing:-0.333px">Labor Day</div>
<div class="t" style="left:627.2px;top:210px;letter-spacing:0.13px">04/25/2021</div>
<div class="t" style="left:806.9px;top:210px;letter-spacing:0.108px">04/29/2021</div>
<div class="abs" style="left:989px;top:210px;width:20px;height:20px;border-radius:50%;background:linear-gradient(#3d76f6,#2c60ec);color:#fff;font-size:9px;text-align:center;line-height:20px">S</div>
<div class="t" style="left:1015.1px;top:210px;color:#646a73;letter-spacing:-0.416px">Sophia</div>
<div class="abs th" style="left:1129px;top:208px;width:36px;height:24px;background:linear-gradient(#edebe8 0 56%,#e4d8c8 62% 82%,#8e7e66 85% 89%,#cfc1aa 92% 100%)"><i style="left:10.5px;top:5.5px;width:13.5px;height:11px;background:#191b20"></i><i style="left:9px;top:16.5px;width:17px;height:1.6px;background:#d4d4d4"></i><i style="left:30.5px;top:9px;width:3px;height:4px;background:#3c4c3c"></i><i style="left:30.5px;top:13px;width:3px;height:2.5px;background:#f8f8f8"></i><i style="left:2px;top:11.5px;width:6px;height:3.5px;background:#b8a488"></i><i style="left:0px;top:0px;width:35px;height:3px;background:#e4e2de"></i><b></b></div>
<div class="t" style="left:34px;top:242px;color:#8f959e;width:30px;text-align:center">6</div>
<div class="t" style="left:80.4px;top:242px;letter-spacing:0.03px">Activities for family</div>
<div class="abs" style="left:346.3px;top:242px;width:37.2px;height:20px;border-radius:10px;background:#fde2e2"></div>
<div class="t" style="left:354px;top:242px;letter-spacing:-0.481px">Jun</div>
<div class="t" style="left:447.3px;top:242px;letter-spacing:-0.236px">Children&#39;s Day</div>
<div class="t" style="left:627.2px;top:242px;letter-spacing:0.13px">05/28/2021</div>
<div class="t" style="left:806.9px;top:242px;letter-spacing:0.108px">06/04/2021</div>
<div class="abs" style="left:989px;top:242px;width:20px;height:20px;border-radius:50%;background:linear-gradient(#f89a2c,#ef7a0c);color:#fff;font-size:9px;text-align:center;line-height:20px">S</div>
<div class="t" style="left:1015.1px;top:242px;color:#646a73;letter-spacing:-0.585px">Serena</div>
<div class="abs th" style="left:1129px;top:240px;width:36px;height:24px;background:#212526"><i style="left:8.5px;top:3.5px;width:4.5px;height:4.5px;background:#e6d49c;border-radius:50%"></i><i style="left:9.5px;top:6px;width:3px;height:2.5px;background:#d8b49c"></i><i style="left:6.5px;top:8.5px;width:8.5px;height:8px;background:#8c909a;border-radius:2px"></i><i style="left:10px;top:13px;width:5px;height:4.5px;background:#ededed"></i><i style="left:7px;top:16px;width:7px;height:5.5px;background:#5a4a52"></i><i style="left:8px;top:10px;width:2px;height:3px;background:#b84848"></i><b></b></div>
<div class="t" style="left:34px;top:274px;color:#8f959e;width:30px;text-align:center">7</div>
<div class="t" style="left:80.4px;top:274px;letter-spacing:-0.083px">Marketing campaign 7</div>
<div class="abs" style="left:346.3px;top:274px;width:32.6px;height:20px;border-radius:10px;background:#ece2fe"></div>
<div class="t" style="left:354px;top:274px;letter-spacing:-0.445px">Jul</div>
<div class="t" style="left:447.3px;top:274px;letter-spacing:-0.019px">Enter event...</div>
<div class="t" style="left:627.2px;top:274px;letter-spacing:0.13px">06/30/2021</div>
<div class="t" style="left:806.9px;top:274px;letter-spacing:0.108px">07/10/2021</div>
<div class="abs" style="left:989px;top:274px;width:20px;height:20px;border-radius:50%;background:linear-gradient(#f89a2c,#ef7a0c);color:#fff;font-size:9px;text-align:center;line-height:20px">J</div>
<div class="t" style="left:1015.1px;top:274px;color:#646a73;letter-spacing:-0.755px">James</div>
<div class="abs th" style="left:1129px;top:272px;width:36px;height:24px;background:linear-gradient(#5c4c42 0,#4a3a32 35%,#2e221c 70%,#1c1410 100%)"><i style="left:14px;top:-3px;width:12px;height:12px;background:radial-gradient(closest-side,#ffffff,rgba(240,200,160,0))"></i><i style="left:17px;top:0px;width:5px;height:6px;background:#fff8f0;border-radius:50%"></i><i style="left:26px;top:2px;width:6px;height:6px;background:radial-gradient(closest-side,#fff0e0,rgba(240,200,160,0))"></i><i style="left:1px;top:1px;width:8px;height:7px;background:radial-gradient(closest-side,#d8c0a8,rgba(200,170,140,0))"></i><i style="left:0px;top:13px;width:35px;height:6px;background:linear-gradient(90deg,#8a5028,#c87838 30%,#d88848 60%,#8a4a28);opacity:.55"></i><i style="left:8px;top:8.5px;width:9px;height:14.5px;background:#2a2220;border-radius:4px 4px 0 0"></i><i style="left:0px;top:19px;width:35px;height:4px;background:#1e1612"></i><i style="left:21px;top:10px;width:5px;height:6px;background:#3a2a22"></i><b></b></div>
<div class="t" style="left:34px;top:306px;color:#8f959e;width:30px;text-align:center">8</div>
<div class="t" style="left:80.4px;top:306px;letter-spacing:-0.083px">Marketing campaign 8</div>
<div class="abs" style="left:346.3px;top:306px;width:40.4px;height:20px;border-radius:10px;background:#d0f0c8"></div>
<div class="t" style="left:354px;top:306px;letter-spacing:-0.053px">Aug</div>
<div class="t" style="left:447.3px;top:306px;letter-spacing:-0.019px">Enter event...</div>
<div class="t" style="left:627.2px;top:306px;letter-spacing:0.13px">07/31/2021</div>
<div class="t" style="left:806.9px;top:306px;letter-spacing:0.222px">08/11/2021</div>
<div class="abs" style="left:989px;top:306px;width:20px;height:20px;border-radius:50%;background:linear-gradient(#3d76f6,#2c60ec);color:#fff;font-size:9px;text-align:center;line-height:20px">K</div>
<div class="t" style="left:1015.1px;top:306px;color:#646a73;letter-spacing:-0.479px">Kevin</div>
<div class="abs th" style="left:1129px;top:304px;width:36px;height:24px;background:linear-gradient(#17142e 0,#221a48 22%,#6a4cc0 36%,#8c70e0 46%,#4a3490 56%,#1c1630 70%,#0e0c16 100%)"><i style="left:2px;top:7.5px;width:7px;height:3px;background:#ece4ff"></i><i style="left:12px;top:9px;width:5px;height:2px;background:#c8b8f8"></i><i style="left:20px;top:7px;width:9px;height:2.4px;background:#d4c4ff"></i><i style="left:27px;top:3px;width:1.6px;height:8px;background:#9a80e0"></i><i style="left:16px;top:2px;width:1.4px;height:7px;background:#7a60c8"></i><i style="left:0px;top:14px;width:35px;height:9px;background:linear-gradient(#1a1428,#0c0a12)"></i><i style="left:5px;top:11px;width:3px;height:5px;background:#120e1c"></i><i style="left:14px;top:12px;width:4px;height:4px;background:#120e1c"></i><i style="left:24px;top:11px;width:3px;height:5px;background:#140f20"></i><i style="left:30px;top:13px;width:4px;height:3px;background:#b06a6a;opacity:.5"></i><b></b></div>
<div class="t" style="left:34px;top:338px;color:#8f959e;width:30px;text-align:center">9</div>
<div class="t" style="left:80.4px;top:338px;letter-spacing:-0.083px">Marketing campaign 9</div>
<div class="abs" style="left:346.3px;top:338px;width:38.5px;height:20px;border-radius:10px;background:#fddfef"></div>
<div class="t" style="left:354px;top:338px;letter-spacing:-1.003px">Sep</div>
<div class="t" style="left:447.3px;top:338px;letter-spacing:-0.019px">Enter event...</div>
<div class="t" style="left:627.2px;top:338px;letter-spacing:0.13px">08/28/2021</div>
<div class="t" style="left:806.9px;top:338px;letter-spacing:0.108px">09/13/2021</div>
<div class="abs" style="left:989px;top:338px;width:20px;height:20px;border-radius:50%;background:linear-gradient(#3d76f6,#2c60ec);color:#fff;font-size:9px;text-align:center;line-height:20px">M</div>
<div class="t" style="left:1015.1px;top:338px;color:#646a73;letter-spacing:-0.365px">Mark</div>
<div class="abs th" style="left:1129px;top:336px;width:48px;height:24px;background:linear-gradient(#7ab2ea 0,#8cbce6 24%,#b4c88c 36%,#d4d040 50%,#d8c83c 68%,#a89838 78%,#2a2618 86%,#14120c 100%)"><i style="left:32px;top:1px;width:13px;height:6px;background:radial-gradient(closest-side,#eef2f6,rgba(220,230,240,0))"></i><i style="left:22px;top:3px;width:8px;height:4px;background:radial-gradient(closest-side,#c8dcee,rgba(200,220,240,0))"></i><i style="left:4px;top:8px;width:7px;height:6px;background:radial-gradient(closest-side,#e89ab4,rgba(230,150,180,0))"></i><i style="left:9px;top:11px;width:7px;height:6px;background:radial-gradient(closest-side,#30b4c8,rgba(40,180,200,0))"></i><i style="left:27px;top:8px;width:7px;height:5px;background:radial-gradient(closest-side,#e8a0b8,rgba(230,150,180,0))"></i><i style="left:17px;top:7px;width:8px;height:6px;background:radial-gradient(closest-side,#e6d83a,rgba(230,220,60,0))"></i><i style="left:36px;top:9px;width:8px;height:6px;background:radial-gradient(closest-side,#e4c838,rgba(230,200,60,0))"></i><i style="left:0px;top:12px;width:5px;height:5px;background:radial-gradient(closest-side,#e07848,rgba(230,120,70,0))"></i><i style="left:20px;top:19px;width:3px;height:2px;background:#c83a6a"></i><i style="left:38px;top:19px;width:3px;height:2px;background:#38a8c8"></i><i style="left:7px;top:20px;width:2px;height:1.5px;background:#e8d040"></i><b></b></div>
<div class="t" style="left:34px;top:370px;color:#8f959e;width:30px;text-align:center">10</div>
<div class="t" style="left:80.4px;top:370px;letter-spacing:-0.073px">Marketing campaign 10</div>
<div class="abs" style="left:346.3px;top:370px;width:37.1px;height:20px;border-radius:10px;background:#e3ec96"></div>
<div class="t" style="left:354px;top:370px;letter-spacing:-0.141px">Oct</div>
<div class="t" style="left:447.3px;top:370px;letter-spacing:-0.019px">Enter event...</div>
<div class="t" style="left:627.2px;top:370px;letter-spacing:0.13px">09/30/2021</div>
<div class="t" style="left:806.9px;top:370px;letter-spacing:0.108px">10/15/2021</div>
<div class="abs" style="left:989px;top:370px;width:20px;height:20px;border-radius:50%;background:linear-gradient(#3d76f6,#2c60ec);color:#fff;font-size:9px;text-align:center;line-height:20px">S</div>
<div class="t" style="left:1015.1px;top:370px;color:#646a73;letter-spacing:-0.416px">Sophia</div>
<div class="abs th" style="left:1129px;top:368px;width:36px;height:24px;background:linear-gradient(#9a8a9c 0,#d2b4b8 16%,#e6c8b4 26%,#8a8c9a 36%,#5c6454 46%,#5e5632 60%,#4c4428 100%)"><i style="left:0px;top:0px;width:12px;height:4px;background:#6c5c74"></i><i style="left:26px;top:1px;width:9px;height:3px;background:#b89ab0"></i><i style="left:0px;top:8px;width:9px;height:5px;background:#2c2c3c"></i><i style="left:9px;top:9px;width:5px;height:4px;background:#dcdfe8"></i><i style="left:24px;top:9.5px;width:6px;height:4.5px;background:#3468c8"></i><i style="left:29px;top:9px;width:6px;height:3px;background:#c8ccd4"></i><i style="left:14.5px;top:6px;width:8px;height:17px;background:#3c5a8c;border-radius:2px"></i><i style="left:19px;top:0.5px;width:2.6px;height:8px;background:#34507c"></i><i style="left:13px;top:8px;width:3px;height:6px;background:#5a78a8"></i><i style="left:16px;top:5px;width:3.4px;height:3.4px;background:#c8a890;border-radius:50%"></i><b></b></div>
<div class="t" style="left:34px;top:402px;color:#8f959e;width:30px;text-align:center">11</div>
<div class="t" style="left:80.4px;top:402px;letter-spacing:-0.046px">Marketing campaign 11</div>
<div class="abs" style="left:346.3px;top:402px;width:39.8px;height:20px;border-radius:10px;background:#eff0f1"></div>
<div class="t" style="left:354px;top:402px;letter-spacing:-0.345px">Nov</div>
<div class="t" style="left:447.3px;top:402px;letter-spacing:-0.019px">Enter event...</div>
<div class="t" style="left:627.2px;top:402px;letter-spacing:0.13px">10/31/2021</div>
<div class="t" style="left:806.9px;top:402px;letter-spacing:0.222px">11/15/2021</div>
<div class="abs" style="left:989px;top:402px;width:20px;height:20px;border-radius:50%;background:linear-gradient(#3d76f6,#2c60ec);color:#fff;font-size:9px;text-align:center;line-height:20px">K</div>
<div class="t" style="left:1015.1px;top:402px;color:#646a73;letter-spacing:-0.479px">Kevin</div>
<div class="abs th" style="left:1129px;top:400px;width:36px;height:24px;background:radial-gradient(ellipse 60% 50% at 48% 50%,#262a26,#0d0f0d 100%)"><i style="left:11px;top:9.5px;width:11px;height:4.5px;background:radial-gradient(closest-side,#dfeee8,rgba(150,190,180,0))"></i><i style="left:13px;top:10.5px;width:7px;height:2.5px;background:#e8f4f0"></i><i style="left:5px;top:11px;width:2.6px;height:2.6px;background:radial-gradient(closest-side,#f8a050,rgba(240,140,60,0))"></i><i style="left:26.5px;top:11px;width:2.6px;height:2.6px;background:radial-gradient(closest-side,#f8a050,rgba(240,140,60,0))"></i><i style="left:0px;top:16px;width:35px;height:7px;background:#111310"></i><i style="left:8px;top:3px;width:1px;height:1px;background:#5a5a50"></i><i style="left:22px;top:5px;width:1px;height:1px;background:#5a5a50"></i><i style="left:28px;top:2px;width:1px;height:1px;background:#4a4a44"></i><b></b></div>
<div class="t" style="left:34px;top:434px;color:#8f959e;width:30px;text-align:center">12</div>
<div class="t" style="left:80.4px;top:434px;letter-spacing:-0.073px">Marketing campaign 12</div>
<div class="abs" style="left:346.3px;top:434px;width:39.2px;height:20px;border-radius:10px;background:#e0e9ff"></div>
<div class="t" style="left:354px;top:434px;letter-spacing:-0.645px">Dec</div>
<div class="t" style="left:447.3px;top:434px;letter-spacing:-0.019px">Enter event...</div>
<div class="t" style="left:627.2px;top:434px;letter-spacing:0.244px">11/26/2021</div>
<div class="t" style="left:806.9px;top:434px;letter-spacing:0.108px">12/14/2021</div>
<div class="abs" style="left:989px;top:434px;width:20px;height:20px;border-radius:50%;background:linear-gradient(#3d76f6,#2c60ec);color:#fff;font-size:9px;text-align:center;line-height:20px">M</div>
<div class="t" style="left:1015.1px;top:434px;color:#646a73;letter-spacing:-0.365px">Mark</div>
<div class="abs th" style="left:1129px;top:432px;width:36px;height:24px;background:linear-gradient(#dfe7ee 0,#d4dde4 20%,#7e8e6e 30%,#5e6e52 42%,#6e6254 60%,#5a4e44 100%)"><i style="left:28.5px;top:0px;width:6.5px;height:21px;background:#4c4c4a"></i><i style="left:27px;top:2px;width:3.4px;height:20px;background:#b4ac9c"></i><i style="left:3px;top:8px;width:9px;height:14px;background:#2a4878;border-radius:3px 3px 0 0"></i><i style="left:5.5px;top:5px;width:4px;height:4px;background:#caa488;border-radius:50%"></i><i style="left:0px;top:9px;width:4px;height:12px;background:#c8a070"></i><i style="left:13px;top:9px;width:4px;height:4px;background:#d8b898;border-radius:50%"></i><i style="left:12.5px;top:12px;width:6px;height:9px;background:#d8d4c8"></i><i style="left:19px;top:10px;width:5px;height:5px;background:#7a9a58"></i><i style="left:23.5px;top:12px;width:4.5px;height:7px;background:#c83838"></i><i style="left:18px;top:15px;width:5px;height:7px;background:#e8c848;opacity:.8"></i><i style="left:0px;top:21px;width:28px;height:2px;background:#4a6a9a"></i><b></b></div>
<div class="t" style="left:34px;top:466px;color:#8f959e;width:30px;text-align:center">13</div>
<div class="t" style="left:80.4px;top:466px;letter-spacing:-0.064px">Digital Marketing</div>
<div class="abs" style="left:346.3px;top:466px;width:36.4px;height:20px;border-radius:10px;background:#e0e9ff"></div>
<div class="t" style="left:354px;top:466px;letter-spacing:-0.881px">Jan</div>
<div class="t" style="left:447.3px;top:466px;letter-spacing:-0.158px">Top Market</div>
<div class="t" style="left:627.2px;top:466px;letter-spacing:0.13px">03/01/2025</div>
<div class="t" style="left:806.9px;top:466px;color:#1456f0;letter-spacing:0.108px">03/31/2025</div>
<div class="abs" style="left:989px;top:466px;width:20px;height:20px;border-radius:50%;background:linear-gradient(150deg,#8a56ee 5%,#b873e8 55%,#e293dd 100%);color:#fff;font-size:7px;text-align:center;line-height:20px">FZ</div>
<div class="t" style="left:1015.1px;top:466px;color:#1f2329;letter-spacing:0.047px">fiqih zulfikar</div>
<div class="abs th" style="left:1129px;top:464px;width:24px;height:24px;background:linear-gradient(90deg,#202022 0 36%,#989ca0 40%,#a4a8ac 100%)"><i style="left:5.5px;top:2.5px;width:4px;height:5px;background:#c49c84;border-radius:40%"></i><i style="left:5px;top:1.5px;width:4.5px;height:2.4px;background:#2a2220"></i><i style="left:3px;top:7.5px;width:8px;height:8px;background:#3a3030"></i><i style="left:5px;top:9px;width:4px;height:4px;background:#b88c74"></i><i style="left:16.5px;top:7.5px;width:6px;height:5px;background:#d4e0ec"></i><i style="left:17px;top:4px;width:1.6px;height:10px;background:#3a3e44"></i><i style="left:0px;top:14.5px;width:24px;height:8.5px;background:#19191b"></i><i style="left:12px;top:13px;width:10px;height:5px;background:#2c2e32"></i><i style="left:1px;top:10px;width:3px;height:9px;background:#2a5a58"></i><b></b></div>
<div class="t" style="left:34px;top:498px;color:#8f959e;width:30px;text-align:center">14</div>
<svg class="abs" style="left:955px;top:467px" width="16" height="16" viewBox="0 0 16 16"><circle cx="8" cy="8.6" r="6.4" fill="#1456f0"/><path d="M8 5V9H11" stroke="#fff" stroke-width="1.4" fill="none" stroke-linecap="round" stroke-linejoin="round"/><path d="M1.2 3.6L3.8 1.4M14.8 3.6L12.2 1.4" stroke="#1456f0" stroke-width="1.4" stroke-linecap="round"/></svg>
<svg class="abs" style="left:34px;top:533px" width="14" height="14" viewBox="0 0 14 14" fill="none" stroke="#8f959e" stroke-width="1.2" stroke-linecap="round" stroke-linejoin="round"><path d="M7 0.6V13.4M0.6 7H13.4"/></svg>
<div class="abs" style="left:0px;top:771px;width:1654px;height:1px;background:#dee0e3"></div>
<div class="t" style="left:255.2px;top:777px;color:#646a73;font-size:12px;letter-spacing:-0.232px">14 records</div>
<svg class="abs" style="left:318px;top:784.5px" width="9" height="6" viewBox="0 0 9 6"><path d="M0.4 0.3H8.6L4.5 5.4Z" fill="#646a73"/></svg>
<div class="abs" style="left:1587px;top:719px;width:36px;height:36px;border-radius:50%;background:#fff;border:1px solid #dee0e3;box-shadow:0 4px 10px rgba(31,35,41,0.1)"></div>
<svg class="abs" style="left:1597.8px;top:729.8px" width="14.4" height="14.4" viewBox="0 0 14.4 14.4" fill="none" stroke="#1f2329" stroke-width="1.5" stroke-linecap="round" stroke-linejoin="round"><circle cx="7.2" cy="7.2" r="6.4"/></svg>
<div class="abs" style="left:1597px;top:729px;width:16px;height:16px;font-size:9.5px;font-weight:bold;text-align:center;line-height:17px;color:#1f2329">?</div>
</div>
</body>
</html>
